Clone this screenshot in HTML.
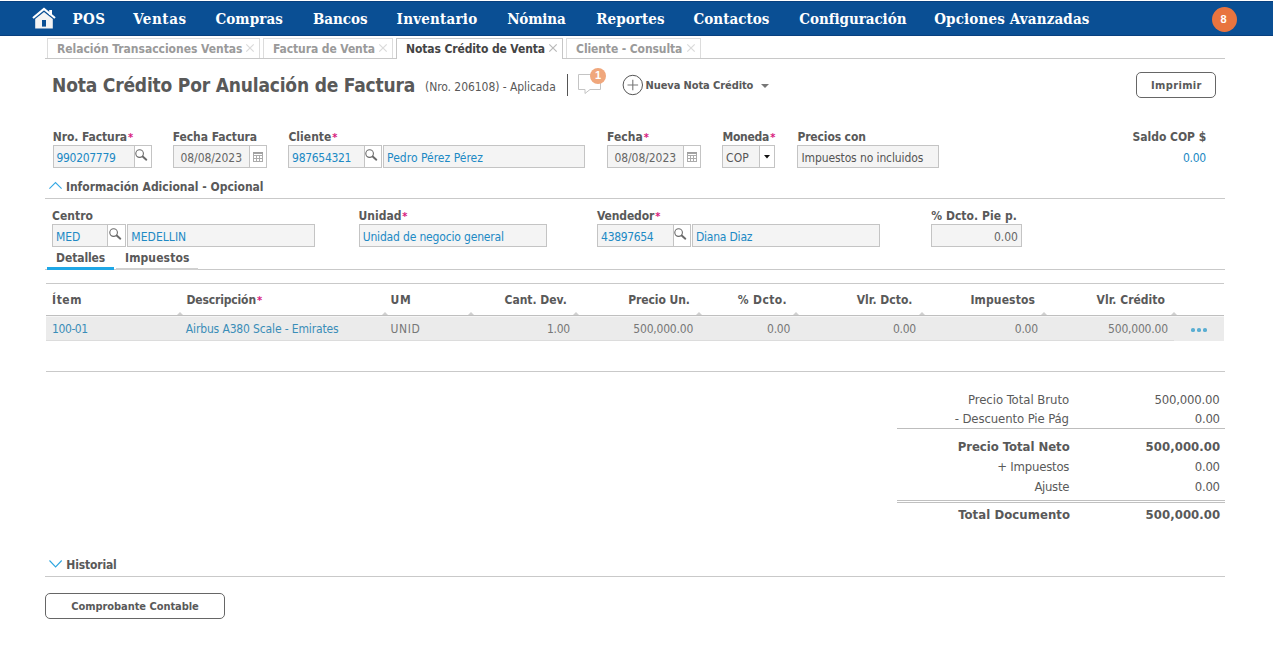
<!DOCTYPE html>
<html lang="es">
<head>
<meta charset="utf-8">
<title>Nota Crédito Por Anulación de Factura</title>
<style>
html,body{margin:0;padding:0;background:#fff;}
body{width:1273px;height:646px;position:relative;overflow:hidden;font-family:'DejaVu Sans Condensed','Liberation Sans',sans-serif;font-size:12px;color:#555;}
.a{position:absolute;box-sizing:border-box;}
.t{position:absolute;white-space:nowrap;line-height:1;font-family:'DejaVu Sans Condensed','Liberation Sans',sans-serif;}
.t.b{font-weight:bold;}
.t.sf{font-family:'DejaVu Serif Condensed','Liberation Serif',serif;}
.t.ar{font-family:'Liberation Sans',sans-serif;}
.nav{left:0;top:1px;width:1273px;height:35px;background:#0a4f94;border-top:1px solid #08407f;border-bottom:1px solid #08407f;}
.tab{top:38px;height:20px;border:1px solid #dcdcdc;border-bottom:none;background:#fff;}
.tab.on{border-color:#c6c6c6;height:21px;}
.hl{height:1px;background:#c9c9c9;}
.in{height:23px;border:1px solid #c4c4c4;background:#f4f4f4;}
.bt{height:23px;border:1px solid #c4c4c4;border-left:none;background:#fff;}
.btn{border:1px solid #666;border-radius:5px;background:#fff;}
.ast{position:absolute;color:#d81b7f;font-weight:bold;font-size:11px;line-height:1;}
svg{position:absolute;overflow:visible;}
.tri{width:0;height:0;border-left:3.5px solid transparent;border-right:3.5px solid transparent;border-bottom:3.5px solid #cfcfcf;}
</style>
</head>
<body>
<!-- NAV BAR -->
<div class="a nav"></div>
<svg style="left:32px;top:8px" width="24" height="21" viewBox="0 0 24 21"><path d="M1 10 L12 1 L23 10" fill="none" stroke="#fff" stroke-width="2.2" stroke-linejoin="miter"/><path d="M3.2 11 L12 4 L20.8 11 L20.8 20.4 L3.2 20.4 Z" fill="#f4f4f4"/><rect x="17.2" y="2" width="2.8" height="5" fill="#fff"/><rect x="10" y="12" width="4" height="6.6" fill="#0a4f94"/></svg>
<div class="a" style="left:1212px;top:7px;width:25px;height:25px;border-radius:50%;background:#e8743f;"></div>

<!-- TABS -->
<div class="a hl" style="left:45px;top:58px;width:1180px;background:#c8c8c8;"></div>
<div class="a tab" style="left:47px;width:213px;"></div>
<div class="a tab" style="left:263px;width:130px;"></div>
<div class="a tab on" style="left:396px;width:167px;"></div>
<div class="a tab" style="left:566px;width:135px;"></div>
<svg style="left:246px;top:44px" width="8" height="8" viewBox="0 0 8 8"><path d="M0.3 0.3 L7.7 7.7 M7.7 0.3 L0.3 7.7" stroke="#dadada" stroke-width="1.2" fill="none"/></svg>
<svg style="left:379px;top:44px" width="8" height="8" viewBox="0 0 8 8"><path d="M0.3 0.3 L7.7 7.7 M7.7 0.3 L0.3 7.7" stroke="#dadada" stroke-width="1.2" fill="none"/></svg>
<svg style="left:549px;top:44px" width="8" height="8" viewBox="0 0 8 8"><path d="M0.3 0.3 L7.7 7.7 M7.7 0.3 L0.3 7.7" stroke="#b9b9b9" stroke-width="1.2" fill="none"/></svg>
<svg style="left:687px;top:44px" width="8" height="8" viewBox="0 0 8 8"><path d="M0.3 0.3 L7.7 7.7 M7.7 0.3 L0.3 7.7" stroke="#dadada" stroke-width="1.2" fill="none"/></svg>

<!-- TITLE ROW -->
<div class="a" style="left:567px;top:74px;width:1px;height:22px;background:#555;"></div>
<svg style="left:578px;top:74px" width="24" height="21" viewBox="0 0 24 21"><path d="M0.5 0.5 H22.5 V15.5 H12 L7 19.5 V15.5 H0.5 Z" fill="#fff" stroke="#c4c4c4" stroke-width="1"/></svg>
<div class="a" style="left:590px;top:68px;width:16px;height:16px;border-radius:50%;background:#f0a77c;"></div>
<svg style="left:622px;top:74px" width="22" height="22" viewBox="0 0 22 22"><circle cx="10.8" cy="11" r="9.7" fill="#fff" stroke="#555" stroke-width="1"/><path d="M5.5 11 H16.1 M10.8 5.7 V16.3" stroke="#777" stroke-width="1.1" fill="none"/></svg>
<svg style="left:761px;top:84px" width="8" height="4" viewBox="0 0 8 4"><path d="M0 0 H8 L4 4 Z" fill="#777"/></svg>
<div class="a btn" style="left:1136px;top:72px;width:80px;height:26px;"></div>

<!-- ROW 1 FIELDS -->
<div class="a in" style="left:53px;top:145px;width:82px;"></div><div class="a bt" style="left:135px;top:145px;width:17px;"></div>
<div class="a in" style="left:173px;top:145px;width:77px;"></div><div class="a bt" style="left:250px;top:145px;width:17px;"></div>
<div class="a in" style="left:288px;top:145px;width:77px;"></div><div class="a bt" style="left:365px;top:145px;width:17px;"></div>
<div class="a in" style="left:383px;top:145px;width:202px;"></div>
<div class="a in" style="left:607px;top:145px;width:77px;"></div><div class="a bt" style="left:684px;top:145px;width:17px;"></div>
<div class="a in" style="left:722px;top:145px;width:38px;"></div><div class="a bt" style="left:760px;top:145px;width:15px;"></div>
<div class="a in" style="left:797px;top:145px;width:142px;"></div>
<svg style="left:134.6px;top:149px" width="14" height="14" viewBox="0 0 14 14"><circle cx="4.6" cy="4.6" r="3.8" fill="#fff" stroke="#6a6a6a" stroke-width="1.1"/><path d="M7.7 7.6 L11.3 10.7" stroke="#6a6a6a" stroke-width="2" stroke-linecap="round" fill="none"/></svg>
<svg style="left:253px;top:152px" width="10" height="10" viewBox="0 0 10 10"><rect x="0" y="0" width="10" height="10" fill="#ababab"/><rect x="0" y="0" width="10" height="1.6" fill="#9f9f9f"/><rect x="1" y="2" width="8" height="1" fill="#fff"/><rect x="1" y="4" width="2" height="2" fill="#fff"/><rect x="4" y="4" width="2" height="2" fill="#fff"/><rect x="7" y="4" width="2" height="2" fill="#fff"/><rect x="1" y="7" width="2" height="2" fill="#fff"/><rect x="4" y="7" width="2" height="2" fill="#fff"/><rect x="7" y="7" width="2" height="2" fill="#fff"/></svg>
<svg style="left:364.6px;top:149px" width="14" height="14" viewBox="0 0 14 14"><circle cx="4.6" cy="4.6" r="3.8" fill="#fff" stroke="#6a6a6a" stroke-width="1.1"/><path d="M7.7 7.6 L11.3 10.7" stroke="#6a6a6a" stroke-width="2" stroke-linecap="round" fill="none"/></svg>
<svg style="left:687px;top:152px" width="10" height="10" viewBox="0 0 10 10"><rect x="0" y="0" width="10" height="10" fill="#ababab"/><rect x="0" y="0" width="10" height="1.6" fill="#9f9f9f"/><rect x="1" y="2" width="8" height="1" fill="#fff"/><rect x="1" y="4" width="2" height="2" fill="#fff"/><rect x="4" y="4" width="2" height="2" fill="#fff"/><rect x="7" y="4" width="2" height="2" fill="#fff"/><rect x="1" y="7" width="2" height="2" fill="#fff"/><rect x="4" y="7" width="2" height="2" fill="#fff"/><rect x="7" y="7" width="2" height="2" fill="#fff"/></svg>
<svg style="left:764px;top:155.2px" width="6" height="3.6" viewBox="0 0 6 3.6"><path d="M0 0 H6 L3 3.6 Z" fill="#111"/></svg>

<!-- SECTION: Informacion adicional -->
<svg style="left:49px;top:181px" width="14" height="9" viewBox="0 0 14 9"><path d="M0.4 7.7 L6.5 1.5 L12.6 7.7" fill="none" stroke="#34a8e4" stroke-width="1.1"/></svg>
<div class="a hl" style="left:45px;top:198px;width:1180px;"></div>

<!-- ROW 2 FIELDS -->
<div class="a in" style="left:52px;top:224px;width:56px;"></div><div class="a bt" style="left:108px;top:224px;width:18px;"></div>
<div class="a in" style="left:127px;top:224px;width:188px;"></div>
<div class="a in" style="left:359px;top:224px;width:188px;"></div>
<div class="a in" style="left:597px;top:224px;width:77px;"></div><div class="a bt" style="left:674px;top:224px;width:17px;"></div>
<div class="a in" style="left:692px;top:224px;width:188px;"></div>
<div class="a in" style="left:931px;top:224px;width:91px;"></div>
<svg style="left:108.6px;top:228px" width="14" height="14" viewBox="0 0 14 14"><circle cx="4.6" cy="4.6" r="3.8" fill="#fff" stroke="#6a6a6a" stroke-width="1.1"/><path d="M7.7 7.6 L11.3 10.7" stroke="#6a6a6a" stroke-width="2" stroke-linecap="round" fill="none"/></svg>
<svg style="left:674.2px;top:228px" width="14" height="14" viewBox="0 0 14 14"><circle cx="4.6" cy="4.6" r="3.8" fill="#fff" stroke="#6a6a6a" stroke-width="1.1"/><path d="M7.7 7.6 L11.3 10.7" stroke="#6a6a6a" stroke-width="2" stroke-linecap="round" fill="none"/></svg>

<!-- SUB TABS -->
<div class="a hl" style="left:45px;top:269px;width:1180px;"></div>
<div class="a" style="left:116px;top:268px;width:82px;height:2px;background:#d0d0d0;"></div>
<div class="a" style="left:47px;top:267px;width:67px;height:3px;background:#1ea7e6;"></div>

<!-- TABLE -->
<div class="a hl" style="left:46px;top:283px;width:1178px;"></div>
<div class="a" style="left:46px;top:315px;width:1178px;height:26px;background:#ebebeb;border-top:1px solid #bfbfbf;"></div><div class="a" style="left:46px;top:316px;width:1178px;height:1px;background:#f6f6f6;"></div><div class="a" style="left:46px;top:340px;width:1128px;height:1px;background:#dcdcdc;"></div>
<div class="a tri" style="left:176.5px;top:311.5px"></div>
<div class="a tri" style="left:381.5px;top:311.5px"></div>
<div class="a tri" style="left:467.5px;top:311.5px"></div>
<div class="a tri" style="left:572.5px;top:311.5px"></div>
<div class="a tri" style="left:695.5px;top:311.5px"></div>
<div class="a tri" style="left:792.5px;top:311.5px"></div>
<div class="a tri" style="left:918.5px;top:311.5px"></div>
<div class="a tri" style="left:1040.5px;top:311.5px"></div>
<div class="a tri" style="left:1170.5px;top:311.5px"></div>
<div class="a" style="left:1191.4px;top:328px;width:3.7px;height:3.7px;border-radius:50%;background:#5aaed2;"></div>
<div class="a" style="left:1197.4px;top:328px;width:3.7px;height:3.7px;border-radius:50%;background:#5aaed2;"></div>
<div class="a" style="left:1203.4px;top:328px;width:3.7px;height:3.7px;border-radius:50%;background:#5aaed2;"></div>
<div class="a hl" style="left:46px;top:371px;width:1179px;"></div>

<!-- TOTALS -->
<div class="a hl" style="left:897px;top:428px;width:328px;background:#bdbdbd;"></div>
<div class="a" style="left:897px;top:500px;width:328px;height:3px;border-top:1px solid #c0c0c0;border-bottom:1px solid #c0c0c0;"></div>

<!-- HISTORIAL -->
<svg style="left:49px;top:560px" width="14" height="8" viewBox="0 0 14 8"><path d="M0.5 0.5 L6.6 7 L12.7 0.5" fill="none" stroke="#2ea6e0" stroke-width="1.1"/></svg>
<div class="a hl" style="left:45px;top:576px;width:1180px;"></div>
<div class="a btn" style="left:45px;top:593px;width:180px;height:26px;"></div>

<!-- TEXT -->
<span class="t b sf" style="left:72.5px;top:12.3px;font-size:15px;color:#fff;letter-spacing:0.37px;">POS</span>
<span class="t b sf" style="left:133.2px;top:12.3px;font-size:15px;color:#fff;letter-spacing:0.56px;">Ventas</span>
<span class="t b sf" style="left:215.4px;top:12.3px;font-size:15px;color:#fff;letter-spacing:0.10px;">Compras</span>
<span class="t b sf" style="left:312.9px;top:12.3px;font-size:15px;color:#fff;letter-spacing:-0.02px;">Bancos</span>
<span class="t b sf" style="left:396.6px;top:12.3px;font-size:15px;color:#fff;letter-spacing:0.22px;">Inventario</span>
<span class="t b sf" style="left:507.2px;top:12.3px;font-size:15px;color:#fff;letter-spacing:-0.16px;">Nómina</span>
<span class="t b sf" style="left:596.2px;top:12.3px;font-size:15px;color:#fff;letter-spacing:0.08px;">Reportes</span>
<span class="t b sf" style="left:693.4px;top:12.3px;font-size:15px;color:#fff;letter-spacing:0.06px;">Contactos</span>
<span class="t b sf" style="left:799.3px;top:12.3px;font-size:15px;color:#fff;letter-spacing:-0.05px;">Configuración</span>
<span class="t b sf" style="left:934.2px;top:12.3px;font-size:15px;color:#fff;letter-spacing:0.15px;">Opciones Avanzadas</span>
<span class="t b" style="left:57.0px;top:42.8px;font-size:12px;color:#9a9a9a;letter-spacing:-0.03px;">Relación Transacciones Ventas</span>
<span class="t b" style="left:273.0px;top:42.8px;font-size:12px;color:#9a9a9a;letter-spacing:-0.10px;">Factura de Venta</span>
<span class="t b" style="left:406.0px;top:42.8px;font-size:12px;color:#444;letter-spacing:-0.11px;">Notas Crédito de Venta</span>
<span class="t b" style="left:576.1px;top:42.8px;font-size:12px;color:#9a9a9a;letter-spacing:-0.11px;">Cliente - Consulta</span>
<span class="t b" style="left:52.1px;top:75.9px;font-size:19px;color:#595959;letter-spacing:-0.19px;">Nota Crédito Por Anulación de Factura</span>
<span class="t" style="left:425.0px;top:80.8px;font-size:12px;color:#595959;letter-spacing:-0.06px;">(Nro. 206108) - Aplicada</span>
<span class="t b" style="left:645.5px;top:79.7px;font-size:11px;color:#595959;letter-spacing:-0.09px;">Nueva Nota Crédito</span>
<span class="t b" style="left:1151.1px;top:79.7px;font-size:11px;color:#595959;letter-spacing:0.34px;">Imprimir</span>
<span class="t b" style="left:52.8px;top:130.8px;font-size:12px;color:#595959;letter-spacing:-0.10px;">Nro. Factura</span>
<span class="t b" style="left:172.7px;top:130.8px;font-size:12px;color:#595959;letter-spacing:-0.06px;">Fecha Factura</span>
<span class="t b" style="left:288.4px;top:130.8px;font-size:12px;color:#595959;letter-spacing:0.03px;">Cliente</span>
<span class="t b" style="left:607.0px;top:130.8px;font-size:12px;color:#595959;letter-spacing:0.08px;">Fecha</span>
<span class="t b" style="left:722.4px;top:130.8px;font-size:12px;color:#595959;letter-spacing:-0.24px;">Moneda</span>
<span class="t b" style="left:797.4px;top:130.8px;font-size:12px;color:#595959;letter-spacing:-0.13px;">Precios con</span>
<span class="t b" style="left:1132.5px;top:130.8px;font-size:12px;color:#595959;letter-spacing:-0.02px;">Saldo COP $</span>
<span class="t" style="left:56.5px;top:151.8px;font-size:12px;color:#2089c4;letter-spacing:-0.31px;">990207779</span>
<span class="t" style="left:180.5px;top:151.8px;font-size:12px;color:#666;letter-spacing:-0.08px;">08/08/2023</span>
<span class="t" style="left:292.1px;top:151.8px;font-size:12px;color:#2089c4;letter-spacing:-0.31px;">987654321</span>
<span class="t" style="left:387.1px;top:151.8px;font-size:12px;color:#2089c4;letter-spacing:0.01px;">Pedro Pérez Pérez</span>
<span class="t" style="left:614.4px;top:151.8px;font-size:12px;color:#666;letter-spacing:-0.06px;">08/08/2023</span>
<span class="t" style="left:726.1px;top:151.8px;font-size:12px;color:#555;letter-spacing:0.08px;">COP</span>
<span class="t" style="left:801.5px;top:151.8px;font-size:12px;color:#555;letter-spacing:-0.11px;">Impuestos no incluidos</span>
<span class="t" style="left:1183.0px;top:151.8px;font-size:12px;color:#2089c4;letter-spacing:-0.28px;">0.00</span>
<span class="t b" style="left:65.9px;top:180.8px;font-size:12px;color:#595959;">Información Adicional - Opcional</span>
<span class="t b" style="left:52.1px;top:209.8px;font-size:12px;color:#595959;letter-spacing:-0.01px;">Centro</span>
<span class="t b" style="left:358.5px;top:209.8px;font-size:12px;color:#595959;">Unidad</span>
<span class="t b" style="left:596.9px;top:209.8px;font-size:12px;color:#595959;letter-spacing:-0.11px;">Vendedor</span>
<span class="t b" style="left:931.2px;top:209.8px;font-size:12px;color:#595959;letter-spacing:0.06px;">% Dcto. Pie p.</span>
<span class="t" style="left:56.1px;top:230.8px;font-size:12px;color:#2089c4;letter-spacing:-0.08px;">MED</span>
<span class="t" style="left:131.3px;top:230.8px;font-size:12px;color:#2089c4;letter-spacing:0.05px;">MEDELLIN</span>
<span class="t" style="left:362.7px;top:230.8px;font-size:12px;color:#2089c4;letter-spacing:-0.17px;">Unidad de negocio general</span>
<span class="t" style="left:601.1px;top:230.8px;font-size:12px;color:#2089c4;letter-spacing:-0.33px;">43897654</span>
<span class="t" style="left:695.9px;top:230.8px;font-size:12px;color:#2089c4;letter-spacing:-0.20px;">Diana Diaz</span>
<span class="t" style="left:994.0px;top:230.8px;font-size:12px;color:#666;letter-spacing:-0.08px;">0.00</span>
<span class="t b" style="left:56.1px;top:251.8px;font-size:12px;color:#595959;letter-spacing:-0.10px;">Detalles</span>
<span class="t b" style="left:125.0px;top:251.8px;font-size:12px;color:#595959;letter-spacing:0.12px;">Impuestos</span>
<span class="t b" style="left:52.1px;top:293.8px;font-size:12px;color:#595959;letter-spacing:0.52px;">Ítem</span>
<span class="t b" style="left:186.5px;top:293.8px;font-size:12px;color:#595959;letter-spacing:-0.15px;">Descripción</span>
<span class="t b" style="left:390.6px;top:293.8px;font-size:12px;color:#595959;letter-spacing:0.58px;">UM</span>
<span class="t b" style="left:504.5px;top:293.8px;font-size:12px;color:#595959;letter-spacing:-0.01px;">Cant. Dev.</span>
<span class="t b" style="left:628.2px;top:293.8px;font-size:12px;color:#595959;letter-spacing:-0.08px;">Precio Un.</span>
<span class="t b" style="left:737.7px;top:293.8px;font-size:12px;color:#595959;letter-spacing:0.40px;">% Dcto.</span>
<span class="t b" style="left:856.7px;top:293.8px;font-size:12px;color:#595959;letter-spacing:0.02px;">Vlr. Dcto.</span>
<span class="t b" style="left:970.4px;top:293.8px;font-size:12px;color:#595959;letter-spacing:0.14px;">Impuestos</span>
<span class="t b" style="left:1096.6px;top:293.8px;font-size:12px;color:#595959;letter-spacing:0.02px;">Vlr. Crédito</span>
<span class="t" style="left:52.1px;top:322.8px;font-size:12px;color:#3a8db8;letter-spacing:-0.43px;">100-01</span>
<span class="t" style="left:185.8px;top:322.8px;font-size:12px;color:#3a8db8;letter-spacing:-0.14px;">Airbus A380 Scale - Emirates</span>
<span class="t" style="left:390.6px;top:322.8px;font-size:12px;color:#777;letter-spacing:0.57px;">UNID</span>
<span class="t" style="left:547.0px;top:322.8px;font-size:12px;color:#777;letter-spacing:-0.28px;">1.00</span>
<span class="t" style="left:633.3px;top:322.8px;font-size:12px;color:#777;letter-spacing:-0.20px;">500,000.00</span>
<span class="t" style="left:767.0px;top:322.8px;font-size:12px;color:#777;letter-spacing:-0.24px;">0.00</span>
<span class="t" style="left:892.9px;top:322.8px;font-size:12px;color:#777;letter-spacing:-0.24px;">0.00</span>
<span class="t" style="left:1014.8px;top:322.8px;font-size:12px;color:#777;letter-spacing:-0.24px;">0.00</span>
<span class="t" style="left:1108.1px;top:322.8px;font-size:12px;color:#777;letter-spacing:-0.21px;">500,000.00</span>
<span class="t" style="left:967.9px;top:393.0px;font-size:13px;color:#5a5a5a;letter-spacing:-0.04px;">Precio Total Bruto</span>
<span class="t" style="left:1154.5px;top:393.0px;font-size:13px;color:#5a5a5a;letter-spacing:-0.19px;">500,000.00</span>
<span class="t" style="left:954.7px;top:412.0px;font-size:13px;color:#5a5a5a;letter-spacing:-0.10px;">- Descuento Pie Pág</span>
<span class="t" style="left:1194.8px;top:412.0px;font-size:13px;color:#5a5a5a;letter-spacing:-0.28px;">0.00</span>
<span class="t b" style="left:957.7px;top:440.0px;font-size:13px;color:#595959;letter-spacing:-0.03px;">Precio Total Neto</span>
<span class="t b" style="left:1145.5px;top:440.0px;font-size:13px;color:#595959;letter-spacing:0.08px;">500,000.00</span>
<span class="t" style="left:997.3px;top:460.0px;font-size:13px;color:#5a5a5a;letter-spacing:-0.22px;">+ Impuestos</span>
<span class="t" style="left:1194.8px;top:460.0px;font-size:13px;color:#5a5a5a;letter-spacing:-0.28px;">0.00</span>
<span class="t" style="left:1034.4px;top:480.0px;font-size:13px;color:#5a5a5a;letter-spacing:-0.31px;">Ajuste</span>
<span class="t" style="left:1194.8px;top:480.0px;font-size:13px;color:#5a5a5a;letter-spacing:-0.28px;">0.00</span>
<span class="t b" style="left:958.2px;top:508.0px;font-size:13px;color:#595959;letter-spacing:0.06px;">Total Documento</span>
<span class="t b" style="left:1145.5px;top:508.0px;font-size:13px;color:#595959;letter-spacing:0.08px;">500,000.00</span>
<span class="t b" style="left:66.3px;top:558.8px;font-size:12px;color:#595959;letter-spacing:-0.16px;">Historial</span>
<span class="t b" style="left:71.2px;top:600.7px;font-size:11px;color:#595959;letter-spacing:-0.05px;">Comprobante Contable</span>
<span class="t b ar" style="left:1220.5px;top:13.8px;font-size:11px;color:#fff;">8</span>
<span class="t b ar" style="left:595.0px;top:70.3px;font-size:11px;color:#fff;">1</span>
<span class="ast" style="left:127.9px;top:132.1px">*</span>
<span class="ast" style="left:332.2px;top:132.1px">*</span>
<span class="ast" style="left:643.7px;top:132.1px">*</span>
<span class="ast" style="left:770.2px;top:132.1px">*</span>
<span class="ast" style="left:402.2px;top:211.1px">*</span>
<span class="ast" style="left:655.2px;top:211.1px">*</span>
<span class="ast" style="left:256.9px;top:295.1px">*</span>
</body>
</html>
